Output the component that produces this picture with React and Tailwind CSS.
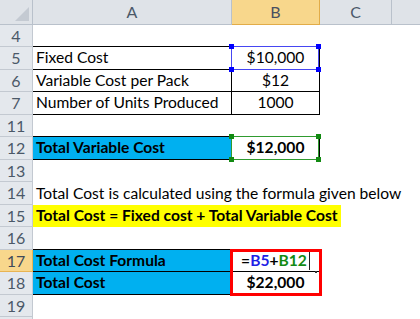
import React from "react";

const FONT = { fontFamily: "Lato, 'Open Sans', sans-serif" };

function RowHead({ n, sel }) {
  return (
    <div
      className={
        sel
          ? "w-[33px] shrink-0 h-full flex items-center justify-center bg-[#f8d78c] border-r border-b border-[#e8b453] text-[#3e4a59] text-[16px]"
          : "w-[33px] shrink-0 h-full flex items-center justify-center bg-[#e4e8ed] border-r border-b border-[#c3c9d1] text-[#4b5868] text-[16px]"
      }
    >
      {n}
    </div>
  );
}

function Row({ n, tall, sel, children }) {
  return (
    <div className={tall ? "flex h-[23px]" : "flex h-[22px]"}>
      <RowHead n={n} sel={sel} />
      {children}
    </div>
  );
}

function Empty() {
  return <div className="flex-1 h-full" />;
}

function Handle({ pos, color }) {
  return <div className={pos + " absolute w-[5px] h-[5px] " + color} />;
}

export default function App() {
  return (
    <div
      className="w-[420px] h-[319px] overflow-hidden bg-white text-black text-[15.6px] leading-none"
      style={FONT}
    >
      {/* header */}
      <div className="flex h-[25px] text-[16px]">
        <div className="w-[33px] shrink-0 h-full bg-[#dfe3e8] border-r border-b border-[#b9c1cb] relative">
          <div className="absolute right-[3px] bottom-[3px] w-0 h-0 border-l-[14px] border-l-transparent border-b-[14px] border-b-[#c4cad2]" />
        </div>
        <div className="w-[199px] shrink-0 h-full bg-[#dfe3e8] border-r border-b border-[#b9c1cb] flex items-center justify-center text-[#4b5868]">
          A
        </div>
        <div className="w-[88px] shrink-0 h-full bg-[#f8d78c] border-r border-b border-[#e2ac48] flex items-center justify-center text-[#4b5060]">
          B
        </div>
        <div className="w-[72px] shrink-0 h-full bg-[#dfe3e8] border-r border-b border-[#b9c1cb] flex items-center justify-center text-[#4b5868]">
          C
        </div>
        <div className="flex-1 h-full bg-[#dfe3e8] border-b border-[#b9c1cb]" />
      </div>

      <Row n={4}>
        <div className="w-[199px] shrink-0 h-full border-b border-black" />
        <div className="w-[88px] shrink-0 h-full border-b border-black" />
        <Empty />
      </Row>

      <Row n={5} tall>
        <div className="w-[199px] shrink-0 h-full border-b border-r border-black flex items-center pl-[3px] whitespace-nowrap">
          Fixed Cost
        </div>
        <div className="w-[88px] shrink-0 h-full border-b border-r border-black flex items-center justify-center relative">
          $10,000
          <div className="absolute -top-[1px] -left-[1px] w-[88px] h-[24px] border border-[#4646f2]">
            <Handle pos="-top-[3px] -left-[3px]" color="bg-[#0000ff]" />
            <Handle pos="-top-[3px] -right-[3px]" color="bg-[#0000ff]" />
            <Handle pos="-bottom-[3px] -left-[3px]" color="bg-[#0000ff]" />
            <Handle pos="-bottom-[3px] -right-[3px]" color="bg-[#0000ff]" />
          </div>
        </div>
        <Empty />
      </Row>

      <Row n={6}>
        <div className="w-[199px] shrink-0 h-full border-b border-r border-black flex items-center pl-[3px] whitespace-nowrap">
          Variable Cost per Pack
        </div>
        <div className="w-[88px] shrink-0 h-full border-b border-r border-black flex items-center justify-center">
          $12
        </div>
        <Empty />
      </Row>

      <Row n={7} tall>
        <div className="w-[199px] shrink-0 h-full border-b border-r border-black flex items-center pl-[3px] whitespace-nowrap">
          Number of Units Produced
        </div>
        <div className="w-[88px] shrink-0 h-full border-b border-r border-black flex items-center justify-center">
          1000
        </div>
        <Empty />
      </Row>

      <Row n={11}>
        <div className="w-[199px] shrink-0 h-full border-b border-black" />
        <Empty />
      </Row>

      <Row n={12} tall>
        <div className="w-[199px] shrink-0 h-full bg-[#00b0f0] border-b border-r border-black flex items-center pl-[3px] font-bold whitespace-nowrap">
          Total Variable Cost
        </div>
        <div className="w-[88px] shrink-0 h-full border-b border-r border-black flex items-center justify-center font-bold relative">
          $12,000
          <div className="absolute -top-[1px] -left-[1px] w-[88px] h-[24px] border border-[#2f9b2f]">
            <Handle pos="-top-[3px] -left-[3px]" color="bg-[#128a12]" />
            <Handle pos="-top-[3px] -right-[3px]" color="bg-[#128a12]" />
            <Handle pos="-bottom-[3px] -left-[3px]" color="bg-[#128a12]" />
            <Handle pos="-bottom-[3px] -right-[3px]" color="bg-[#128a12]" />
          </div>
        </div>
        <Empty />
      </Row>

      <Row n={13}>
        <Empty />
      </Row>

      <Row n={14} tall>
        <div className="flex-1 h-full flex items-center pl-[3px] whitespace-nowrap">
          Total Cost is calculated using the formula given below
        </div>
      </Row>

      <Row n={15}>
        <div className="flex-1 h-full flex">
          <div className="h-full bg-[#ffff00] flex items-center pl-[3px] pr-[3px] font-bold whitespace-nowrap">
            Total Cost = Fixed cost + Total Variable Cost
          </div>
        </div>
      </Row>

      <Row n={16} tall>
        <div className="w-[199px] shrink-0 h-full border-b border-black" />
        <div className="w-[88px] shrink-0 h-full" />
        <Empty />
      </Row>

      <Row n={17} sel>
        <div className="w-[199px] shrink-0 h-full bg-[#00b0f0] border-b border-r border-black flex items-center pl-[3px] font-bold whitespace-nowrap">
          Total Cost Formula
        </div>
        <div className="w-[88px] shrink-0 h-full border-b border-r border-black flex items-center justify-center font-bold relative">
          <span>=</span>
          <span className="text-[#1f1fe6]">B5</span>
          <span>+</span>
          <span className="text-[#138a13]">B12</span>
          <span className="inline-block w-[1px] h-[19px] bg-[#222] ml-[2px]" />
          <div className="absolute -top-[1px] -left-[2px] w-[92px] h-[47px] border-[3px] border-[#ff0000] z-10" />
          <div className="absolute -bottom-[2px] right-[2px] w-[2px] h-[2px] bg-[#333]" />
        </div>
        <Empty />
      </Row>

      <Row n={18} tall>
        <div className="w-[199px] shrink-0 h-full bg-[#00b0f0] border-b border-r border-black flex items-center pl-[3px] font-bold whitespace-nowrap">
          Total Cost
        </div>
        <div className="w-[88px] shrink-0 h-full border-b border-r border-black flex items-center justify-center font-bold">
          $22,000
        </div>
        <Empty />
      </Row>

      <Row n={19}>
        <Empty />
      </Row>

      <Row n="" tall>
        <Empty />
      </Row>
    </div>
  );
}
